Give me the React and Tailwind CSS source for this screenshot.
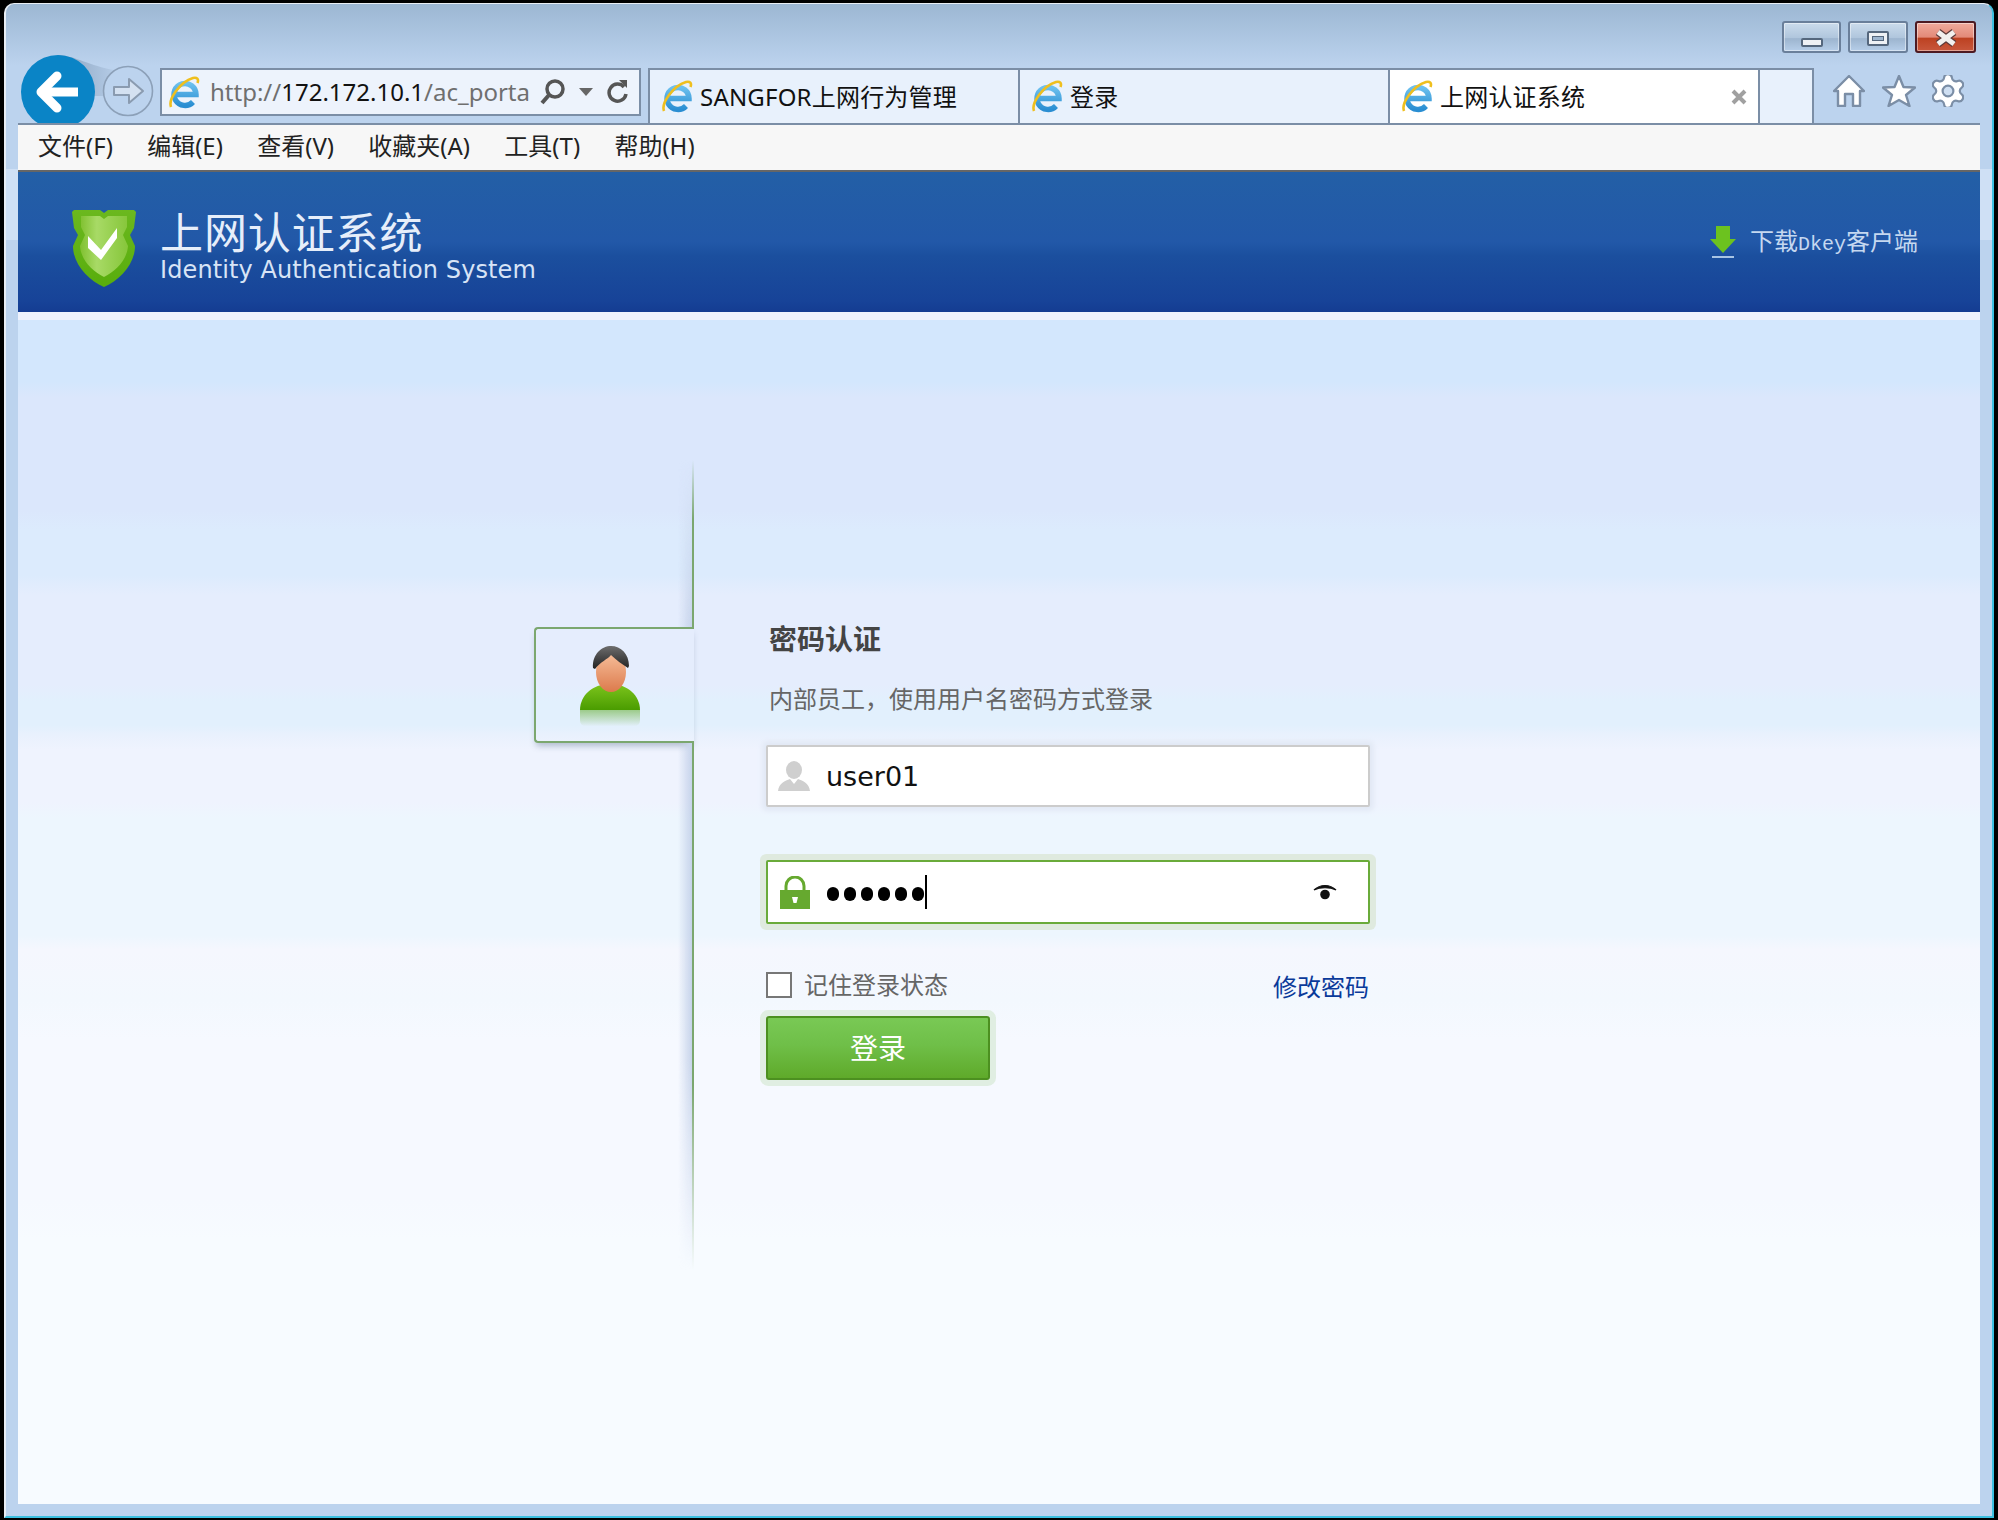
const IeIcon = () => (
  <svg width="32" height="33" viewBox="0 0 32 33" className="shrink-0">
    <defs>
      <linearGradient id="ieBlue" x1="0" y1="0" x2="0" y2="1">
        <stop offset="0" stopColor="#6cc0ee" />
        <stop offset="1" stopColor="#2a8ed2" />
      </linearGradient>
    </defs>
    <path
      d="M7 18.5 H28 A11 11 0 1 0 25 26"
      fill="none"
      stroke="url(#ieBlue)"
      strokeWidth="5.5"
    />
    <path d="M3 31 C0 23 12 6 25 2 C29 1 31 3 29.5 7" fill="none" stroke="#efbf1e" strokeWidth="2.6" />
  </svg>
);

const NavButtons = () => (
  <svg width="133" height="68" viewBox="21 55 133 68" className="ml-[15px] shrink-0">
    <defs>
      <linearGradient id="navJoin" x1="0" y1="0" x2="1" y2="0">
        <stop offset="0" stopColor="#8ba3bf" />
        <stop offset="1" stopColor="#b4cbe6" />
      </linearGradient>
    </defs>
    <path d="M58 55 C76 56 90 66 114 70 L104 96 L80 96 Z" fill="url(#navJoin)" />
    <circle cx="128" cy="91" r="24.5" fill="#bcd3ee" stroke="#8ca0b8" strokeWidth="1.6" />
    <path
      d="M114 87 L129 87 L129 79 L143 91 L129 103 L129 95 L114 95 Z"
      fill="#d4e1f1"
      stroke="#8a9bb0"
      strokeWidth="2"
      strokeLinejoin="round"
    />
    <circle cx="58" cy="92" r="37" fill="#0a84c6" />
    <path d="M44 92 H78" fill="none" stroke="#fff" strokeWidth="9" />
    <path
      d="M57 76 L41 92 L57 108"
      fill="none"
      stroke="#fff"
      strokeWidth="9"
      strokeLinecap="round"
      strokeLinejoin="round"
    />
  </svg>
);

const WinButton = ({ className, children }) => (
  <div
    className={`flex h-[32px] items-center justify-center rounded-[3px] border-2 pt-[2px] shadow-[inset_0_0_0_1px_rgba(255,255,255,0.45)] ${className}`}
  >
    {children}
  </div>
);

const Tab = ({ title, active, extra }) => (
  <div
    className={`flex h-[55px] w-[370px] items-center border-2 border-b-0 border-l-0 border-[#7b8ea6] pl-[11px] ${
      active ? "bg-white" : "bg-[#e8f1fc]"
    }`}
  >
    <IeIcon />
    <span className="ml-[7px] text-[24px] leading-none tracking-[0.2px] whitespace-nowrap text-[#111]">{title}</span>
    {extra}
  </div>
);

const Shield = () => (
  <svg width="64" height="79" viewBox="0 0 64 79" className="shrink-0">
    <defs>
      <linearGradient id="shieldIn" x1="0" y1="0" x2="1" y2="0">
        <stop offset="0" stopColor="#7fc02f" />
        <stop offset="0.35" stopColor="#a8da66" />
        <stop offset="1" stopColor="#86c63a" />
      </linearGradient>
      <linearGradient id="shieldOut" x1="0" y1="0" x2="0" y2="1">
        <stop offset="0" stopColor="#6bb81e" />
        <stop offset="1" stopColor="#58ad0c" />
      </linearGradient>
    </defs>
    <path
      d="M2 2 H28 L32 5 L36 2 H62 L64 4 L62 20 L58 27 L63 38 C63 56 48 72 32 79 C16 72 1 56 1 38 L6 27 L2 20 L0 4 Z"
      fill="url(#shieldOut)"
    />
    <path
      d="M9 8 H28 L32 11 L36 8 H55 L55 19 L51 27 L56 38 C55 52 44 63 32 69 C20 63 9 52 8 38 L13 27 L9 19 Z"
      fill="url(#shieldIn)"
    />
    <path d="M16 28 L29 42 L45 20 L45 30 L29 52 L16 40 Z" fill="#fff" />
  </svg>
);

const Avatar = () => (
  <svg width="60" height="80" viewBox="0 0 60 80">
    <defs>
      <linearGradient id="avBody" x1="0" y1="0" x2="0" y2="1">
        <stop offset="0" stopColor="#7dc51d" />
        <stop offset="1" stopColor="#4a9c00" />
      </linearGradient>
      <linearGradient id="avFace" x1="0" y1="0" x2="0" y2="1">
        <stop offset="0" stopColor="#f7c09c" />
        <stop offset="1" stopColor="#dc7a4c" />
      </linearGradient>
      <linearGradient id="avHair" x1="0" y1="0" x2="0" y2="1">
        <stop offset="0" stopColor="#6d6d6d" />
        <stop offset="1" stopColor="#222" />
      </linearGradient>
      <linearGradient id="avShadow" x1="0" y1="0" x2="0" y2="1">
        <stop offset="0" stopColor="#9ccb8a" />
        <stop offset="1" stopColor="#e2effa" />
      </linearGradient>
    </defs>
    <path d="M0 64 C0 50 12 38 30 38 C48 38 60 50 60 64 L60 64 Z" fill="url(#avBody)" />
    <path d="M0 64 H60 V74 Q60 80 54 80 H6 Q0 80 0 74 Z" fill="url(#avShadow)" />
    <ellipse cx="31" cy="26" rx="15" ry="20" fill="url(#avFace)" />
    <path
      d="M13 22 C12 8 22 0 31 0 C41 0 49 8 49 20 L48 22 C42 18 36 14 31 9 C28 13 20 16 15 23 Z"
      fill="url(#avHair)"
    />
  </svg>
);

export default function App() {
  return (
    <div className="h-[1520px] w-[1998px] overflow-hidden bg-black pl-[4px] pr-[4px] pb-[2px] pt-[3px] font-['Noto_Sans','Noto_Sans_CJK_SC',sans-serif]">
      <div className="flex h-full flex-col rounded-t-[10px] border-t border-b-2 border-l-2 border-r-2 border-t-[#e8eef5] border-b-[#3cc0e0] border-l-[#e8eef5] border-r-[#3cc0e0] bg-[linear-gradient(#9cb7d3,#bcd3ee_62px,#bcd3ee_165px,#cfe0f5_165px,#cfe0f5_236px,#bcd3ee_236px)]">
        {/* window buttons */}
        <div className="flex h-[51px] shrink-0 justify-end gap-[7px] pr-[16px] pt-[17px]">
          <WinButton className="w-[59px] border-[#6a7f9a] bg-[linear-gradient(#cbdcec,#b0c6dd_52%,#9db5cf_56%,#b6cee9)]">
            <div className="mt-[8px] h-[9px] w-[22px] rounded-[2px] border-2 border-[#55677d] bg-[#eef1f5]" />
          </WinButton>
          <WinButton className="w-[60px] border-[#6a7f9a] bg-[linear-gradient(#cbdcec,#b0c6dd_52%,#9db5cf_56%,#b6cee9)]">
            <div className="flex h-[15px] w-[22px] items-center justify-center rounded-[2px] border-2 border-[#55677d] bg-[#eef1f5]">
              <div className="h-[5px] w-[12px] border border-[#55677d] bg-[#9db5cf]" />
            </div>
          </WinButton>
          <WinButton className="w-[61px] border-[#4d1a22] bg-[linear-gradient(#f0aa9c,#e38a78_50%,#bd4222_55%,#c8573c)]">
            <svg width="24" height="18" viewBox="0 0 24 18">
              <path d="M4 3 L20 15 M20 3 L4 15" stroke="#5c3a3a" strokeWidth="7.5" />
              <path d="M4 3 L20 15 M20 3 L4 15" stroke="#f2f0ee" strokeWidth="5" />
            </svg>
          </WinButton>
        </div>

        {/* address bar and tabs */}
        <div className="flex h-[68px] shrink-0 items-start overflow-hidden">
          <NavButtons />
          <div className="ml-[6px] mt-[13px] flex h-[48px] w-[481px] shrink-0 items-center border-2 border-[#7b8ea6] bg-[#edf3fc] pl-[6px]">
            <IeIcon />
            <div className="ml-[10px] w-[320px] text-[24px] leading-none whitespace-nowrap text-[#6f6f6f]">
              http://<span className="text-[#111]">172.172.10.1</span>/ac_porta
            </div>
            <svg width="28" height="28" viewBox="0 0 28 28" className="ml-[9px] shrink-0">
              <circle cx="16" cy="11" r="8" fill="none" stroke="#555" strokeWidth="3.5" />
              <path d="M10 17 L3 25" stroke="#555" strokeWidth="4" />
            </svg>
            <svg width="16" height="10" viewBox="0 0 16 10" className="ml-[11px] shrink-0">
              <path d="M1 1 H15 L8 9 Z" fill="#666" />
            </svg>
            <svg width="22" height="26" viewBox="0 0 22 26" className="ml-[13px] shrink-0">
              <path d="M17 8 A8.5 8.5 0 1 0 19 15" fill="none" stroke="#555" strokeWidth="3.5" />
              <path d="M12 1 L20 1 L20 9 Z" fill="#555" />
            </svg>
          </div>
          <div className="ml-[7px] mt-[13px] flex shrink-0 border-l-2 border-[#7b8ea6]">
            <Tab title="SANGFOR上网行为管理" />
            <Tab title="登录" />
            <Tab
              title="上网认证系统"
              active
              extra={
                <svg width="16" height="16" viewBox="0 0 16 16" className="ml-[146px] shrink-0">
                  <path d="M2 2 L14 14 M14 2 L2 14" stroke="#a0a0a0" strokeWidth="4" />
                </svg>
              }
            />
            <div className="h-[55px] w-[54px] border-2 border-b-0 border-l-0 border-[#7b8ea6] bg-[#e8f1fc]" />
          </div>
          <svg width="32" height="32" viewBox="0 0 32 32" className="ml-[19px] mt-[20px] shrink-0">
            <path
              d="M16 1 L31 16 L27 16 L27 31 L20 31 L20 19 L12 19 L12 31 L5 31 L5 16 L1 16 Z"
              fill="#fff"
              stroke="#7b8ea6"
              strokeWidth="2.4"
              strokeLinejoin="round"
            />
          </svg>
          <svg width="34" height="32" viewBox="0 0 34 32" className="ml-[17px] mt-[20px] shrink-0">
            <path
              d="M17 1 L21.5 12 L33 12.5 L24 20 L27.5 31 L17 25 L6.5 31 L10 20 L1 12.5 L12.5 12 Z"
              fill="#fff"
              stroke="#7b8ea6"
              strokeWidth="2.4"
              strokeLinejoin="round"
            />
          </svg>
          <svg width="32" height="32" viewBox="2.5 2.5 19 19" className="ml-[16px] mt-[20px] shrink-0">
            <path
              d="M9.671 4.136a2.34 2.34 0 0 1 4.659 0 2.34 2.34 0 0 0 3.319 1.915 2.34 2.34 0 0 1 2.33 4.033 2.34 2.34 0 0 0 0 3.831 2.34 2.34 0 0 1-2.33 4.033 2.34 2.34 0 0 0-3.319 1.915 2.34 2.34 0 0 1-4.659 0 2.34 2.34 0 0 0-3.32-1.915 2.34 2.34 0 0 1-2.33-4.033 2.34 2.34 0 0 0 0-3.831A2.34 2.34 0 0 1 6.35 6.051a2.34 2.34 0 0 0 3.319-1.915"
              fill="#fff"
              stroke="#7b8ea6"
              strokeWidth="1.3"
            />
            <circle cx="12" cy="12" r="3.2" fill="#cfdff2" stroke="#7b8ea6" strokeWidth="1.3" />
          </svg>
        </div>

        {/* menu bar and page */}
        <div className="mx-[12px] mb-[12px] flex min-h-0 flex-1 flex-col">
          <div className="flex h-[49px] shrink-0 items-center gap-[34.3px] border-y-2 border-t-[#7b8ea6] border-b-[#666] bg-[#f7f7f7] pb-[3px] pl-[20px] text-[24px] leading-none text-[#222]">
            <span>文件(F)</span>
            <span>编辑(E)</span>
            <span>查看(V)</span>
            <span>收藏夹(A)</span>
            <span>工具(T)</span>
            <span>帮助(H)</span>
          </div>

          <div className="flex h-[140px] shrink-0 items-center justify-between bg-[linear-gradient(#235fa6,#2258a8_50%,#1b4f9e_60%,#174398_92%,#143c92)] pl-[54px] pr-[62px]">
            <div className="flex items-center pt-[11px]">
              <Shield />
              <div className="ml-[24px] flex flex-col">
                <div className="text-[43px] leading-[44px] tracking-[0.9px] whitespace-nowrap text-[#e6eefa]">
                  上网认证系统
                </div>
                <div className="mt-[1px] font-['DejaVu_Sans',sans-serif] text-[24px] leading-[28px] tracking-[0.1px] whitespace-nowrap text-[#d8e4f6]">
                  Identity Authentication System
                </div>
              </div>
            </div>
            <div className="flex items-center text-[24px] leading-none whitespace-nowrap text-[#c5d8f0]">
              <svg width="26" height="33" viewBox="0 0 26 33" className="shrink-0">
                <path d="M6 0 H20 V13 H26 L13 27 L0 13 H6 Z" fill="#6cc21f" />
                <rect x="2" y="30" width="22" height="2" fill="#a8c4e4" />
              </svg>
              <span className="ml-[14px]">
                下载<span className="font-['Liberation_Mono',monospace] text-[20px]">Dkey</span>客户端
              </span>
            </div>
          </div>

          <div className="flex min-h-0 flex-1 border-t-[8px] border-[#eef2fd] bg-[linear-gradient(#d3e7fd_62px,#dbe7fc_78px,#dbe7fc_190px,#dcebfd_210px,#dcebfd_255px,#e5edfd_275px,#e5edfd_365px,#e2f0fd_381px,#e2f0fd_405px,#e9f1fd_415px,#eff3fe_430px,#eff3fe_482px,#edf6fe_498px,#edf6fe_615px,#f5f7fe_630px,#f3f8fe_680px,#f6f9ff_720px,#f6f9ff_880px,#f7fbff_920px)] pl-[516px]">
            {/* left rail with the avatar tab */}
            <div className="flex h-[950px] w-[160px] shrink-0 flex-col items-end pt-[140px]">
              <div className="flex h-[167px] w-full justify-end">
                <div className="w-[14px] bg-[linear-gradient(to_left,#c6d3ea,transparent)] [mask-image:linear-gradient(transparent,black)]" />
                <div className="w-[2px] bg-[linear-gradient(transparent,#7ba76f_35%)]" />
              </div>
              <div className="flex h-[116px] w-full items-center rounded-l-[4px] border-y-2 border-l-2 border-[#7ba76f] pl-[44px] pt-[2px] shadow-[0_5px_6px_-2px_rgba(70,90,120,0.35)]">
                <Avatar />
              </div>
              <div className="flex h-[527px] w-full justify-end">
                <div className="w-[14px] bg-[linear-gradient(to_left,#c6d3ea,transparent)] [mask-image:linear-gradient(black_60%,transparent)]" />
                <div className="w-[2px] bg-[linear-gradient(#7ba76f_65%,transparent)]" />
              </div>
            </div>

            {/* login form */}
            <div className="ml-[72px] w-[604px] pt-[299px]">
              <div className="h-[40px] pl-[3px] text-[28px] leading-[40px] font-bold text-[#444]">密码认证</div>
              <div className="mt-[22px] h-[36px] pl-[3px] text-[24px] leading-[36px] text-[#666]">
                内部员工，使用用户名密码方式登录
              </div>
              <div className="mt-[28px] flex h-[62px] items-center rounded-[2px] border-2 border-[#ccc] bg-white pl-[10px] shadow-[0_0_5px_4px_#e2e9f5]">
                <svg width="32" height="30" viewBox="0 0 32 30" className="shrink-0">
                  <ellipse cx="16" cy="9" rx="8" ry="9" fill="#cfcfcf" />
                  <path d="M0 30 C1 22 7 20 12 18 L16 23 L20 18 C25 20 31 22 32 30 Z" fill="#cfcfcf" />
                </svg>
                <span className="ml-[16px] font-['DejaVu_Sans',sans-serif] text-[27px] leading-none text-[#111]">
                  user01
                </span>
              </div>
              <div className="mt-[53px] flex h-[64px] items-center rounded-[2px] border-2 border-[#6aab3a] bg-white pl-[12px] pr-[31px] shadow-[0_0_0_6px_#dfeadf]">
                <svg width="30" height="33" viewBox="0 0 30 33" className="shrink-0">
                  <path d="M6 16 V10 A9 9 0 0 1 24 10 V16" fill="none" stroke="#66a92f" strokeWidth="3" />
                  <rect x="0" y="14" width="30" height="19" fill="#66a92f" />
                  <path d="M12 21 H18 L16.5 27 H13.5 Z" fill="#fff" />
                </svg>
                <div className="ml-[17px] mt-[3px] flex gap-[5px]">
                  {[0, 1, 2, 3, 4, 5].map((i) => (
                    <span key={i} className="h-[14px] w-[12px] rounded-full bg-black" />
                  ))}
                </div>
                <span className="ml-[1px] h-[34px] w-[2px] bg-black" />
                <svg width="24" height="16" viewBox="0 0 24 16" className="ml-auto shrink-0">
                  <path d="M1 6 C7 0 17 0 23 6 C17 3 7 3 1 6 Z" fill="#111" stroke="#111" strokeWidth="1.2" />
                  <circle cx="12" cy="10.5" r="4.8" fill="#111" />
                </svg>
              </div>
              <div className="mt-[46px] flex h-[30px] items-center text-[24px] leading-none">
                <span className="h-[26px] w-[26px] border-2 border-[#777] bg-white" />
                <span className="ml-[12px] text-[#666]">记住登录状态</span>
                <span className="ml-auto mr-[1px] mt-[4px] text-[#0a3a9a]">修改密码</span>
              </div>
              <button className="mt-[16px] flex h-[64px] w-[224px] items-center justify-center rounded-[3px] border-2 border-[#4c9020] bg-[linear-gradient(#79c955,#6fbf48_45%,#5faa2a)] text-[28px] leading-none text-white shadow-[0_0_0_6px_#e0eee2]">
                登录
              </button>
            </div>
          </div>
        </div>
      </div>
    </div>
  );
}
